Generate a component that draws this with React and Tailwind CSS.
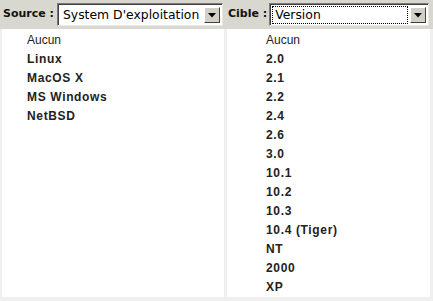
import React from 'react';

const sourceItems = ['Linux', 'MacOS X', 'MS Windows', 'NetBSD'];
const targetItems = ['2.0', '2.1', '2.2', '2.4', '2.6', '3.0', '10.1', '10.2', '10.3', '10.4 (Tiger)', 'NT', '2000', 'XP'];

function FakeSelect({ value, focused, className }) {
  return (
    <div className={`h-[23px] flex items-stretch bg-white border border-t-[#7a7a7a] border-l-[#7a7a7a] border-b-[#e8e8e8] border-r-[#e8e8e8] ${className}`}>
      <div className="flex-1 flex items-center pl-[1px] pr-[2px] py-[1px] border-t border-l border-[#404040] min-w-0">
        <span className={`flex-1 min-w-0 overflow-hidden h-full flex items-center pl-[3px] text-[12.4px] text-black whitespace-nowrap ${focused ? 'outline outline-1 outline-dotted outline-black -outline-offset-1' : ''}`}>
          {value}
        </span>
        <div className="shrink-0 w-[16px] h-[16px] ml-[2px] bg-[#d4d0c8] border border-t-white border-l-white border-b-[#404040] border-r-[#404040] flex items-center justify-center">
          <svg width="8" height="5" viewBox="0 0 8 5">
            <path d="M0 0 L8 0 L4 4.5 Z" fill="#000" />
          </svg>
        </div>
      </div>
    </div>
  );
}

function ItemList({ items, indent }) {
  return (
    <div className={`bg-white pt-[2px] font-['Liberation_Sans',Arial,sans-serif] ${indent}`}>
      <div className="h-[19px] leading-[19px] text-[12px] text-[#222]">Aucun</div>
      {items.map(item => (
        <div key={item} className="h-[19px] leading-[19px] text-[12px] font-bold tracking-[0.65px] text-[#222]">{item}</div>
      ))}
    </div>
  );
}

export default function App() {
  return (
    <div className="w-[433px] h-[301px] bg-[#efefef] font-['DejaVu_Sans',sans-serif] flex flex-col overflow-hidden">
      <div className="h-[29px] bg-[#d9d8d0] flex items-center shrink-0">
        <div className="w-[225px] flex items-center pl-[3px]">
          <span className="text-[11px] font-bold text-[#111]">Source :</span>
          <FakeSelect value="System D'exploitation" className="ml-[3px] w-[166px]" />
        </div>
        <div className="flex-1 flex items-center pl-[3px] pr-[4px]">
          <span className="text-[11px] font-bold text-[#111]">Cible :</span>
          <FakeSelect value="Version" focused className="ml-[2px] flex-1" />
        </div>
      </div>
      <div className="flex flex-1 gap-[3px] pl-[2px] pr-[3px] pb-[4px]">
        <div className="w-[222px] bg-white">
          <ItemList items={sourceItems} indent="pl-[25px]" />
        </div>
        <div className="flex-1 bg-white">
          <ItemList items={targetItems} indent="pl-[39px]" />
        </div>
      </div>
    </div>
  );
}
